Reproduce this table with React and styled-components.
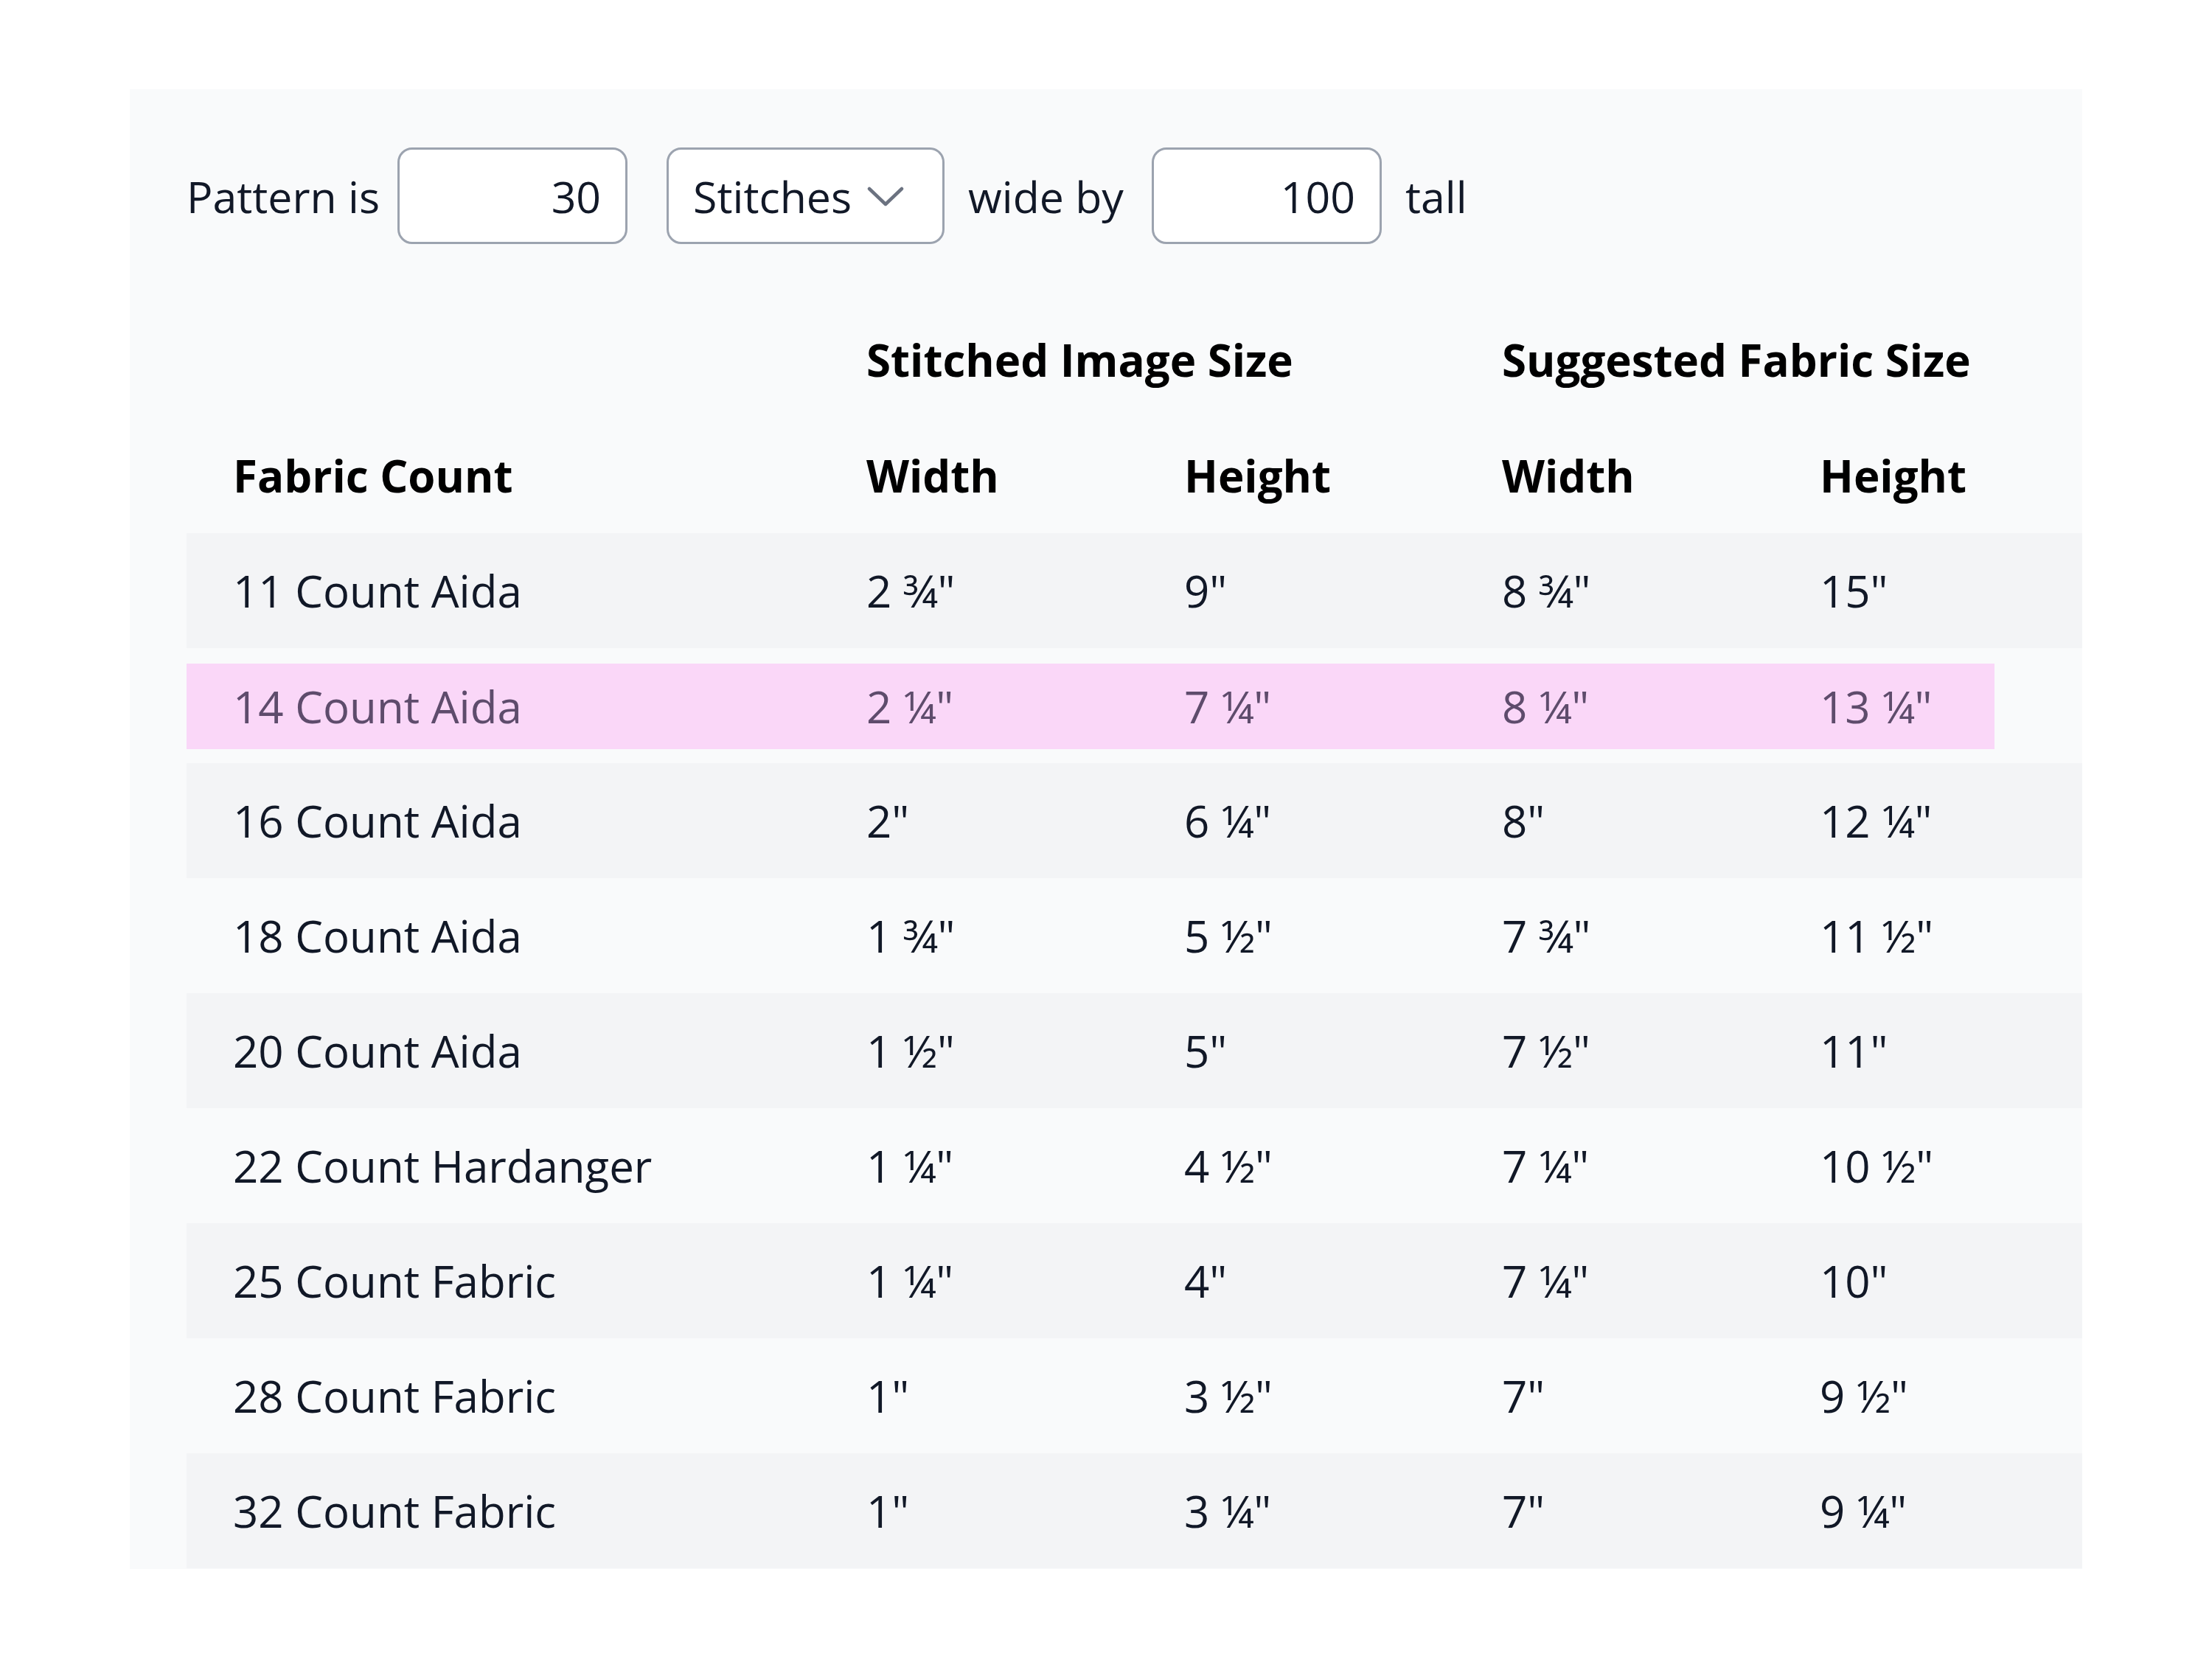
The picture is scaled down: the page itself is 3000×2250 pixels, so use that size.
import React, { useState } from 'react';
import styled, { createGlobalStyle } from 'styled-components';

const GlobalStyle = createGlobalStyle`
  html, body {
    margin: 0;
    padding: 0;
    background: #ffffff;
  }
  body {
    font-family: "Open Sans", "Noto Sans", sans-serif;
    color: #111827;
  }
`;

// rows of the chart: fabric name, stitched w/h, suggested fabric w/h
const rows = [
  ['11 Count Aida', '2 ¾"', '9"', '8 ¾"', '15"'],
  ['14 Count Aida', '2 ¼"', '7 ¼"', '8 ¼"', '13 ¼"'],
  ['16 Count Aida', '2"', '6 ¼"', '8"', '12 ¼"'],
  ['18 Count Aida', '1 ¾"', '5 ½"', '7 ¾"', '11 ½"'],
  ['20 Count Aida', '1 ½"', '5"', '7 ½"', '11"'],
  ['22 Count Hardanger', '1 ¼"', '4 ½"', '7 ¼"', '10 ½"'],
  ['25 Count Fabric', '1 ¼"', '4"', '7 ¼"', '10"'],
  ['28 Count Fabric', '1"', '3 ½"', '7"', '9 ½"'],
  ['32 Count Fabric', '1"', '3 ¼"', '7"', '9 ¼"'],
];

const ChevronIcon = () => (
  <svg width="50" height="30" viewBox="0 0 50 30" fill="none">
    <path d="M3 4 L25 25 L47 4" stroke="#6b7280" strokeWidth="4.5" strokeLinecap="round" strokeLinejoin="round" />
  </svg>
);

const App = () => {
  const [wide, setWide] = useState('30');
  const [tall, setTall] = useState('100');
  const [unit, setUnit] = useState('stitches');

  return (
    <>
      <GlobalStyle />
      <Page>
        <Panel>
          <Controls>
            <Label $gap={24}>Pattern is</Label>
            <NumberInput value={wide} onChange={(e) => setWide(e.target.value)} />
            <SelectWrap>
              <Select value={unit} onChange={(e) => setUnit(e.target.value)}>
                <option value="stitches">Stitches</option>
                <option value="inches">Inches</option>
              </Select>
              <ChevronBox>
                <ChevronIcon />
              </ChevronBox>
            </SelectWrap>
            <Label $gap={38}>wide by</Label>
            <NumberInput value={tall} onChange={(e) => setTall(e.target.value)} />
            <Label>tall</Label>
          </Controls>

          <Chart>
            <HeadRow>
              <HeadCell />
              <HeadCell $span={2}>Stitched Image Size</HeadCell>
              <HeadCell $span={2}>Suggested Fabric Size</HeadCell>
            </HeadRow>
            <HeadRow>
              <HeadCell>Fabric Count</HeadCell>
              <HeadCell>Width</HeadCell>
              <HeadCell>Height</HeadCell>
              <HeadCell>Width</HeadCell>
              <HeadCell>Height</HeadCell>
            </HeadRow>
            {rows.map((row, i) => (
              <BodyRow key={row[0]} $striped={i % 2 === 0} $highlight={i === 1}>
                {row.map((cell, j) => (
                  <Cell key={j} $highlight={i === 1}>{cell}</Cell>
                ))}
              </BodyRow>
            ))}
          </Chart>
        </Panel>
      </Page>
    </>
  );
};

export default App;

const Page = styled.div`
  width: 3000px;
  height: 2250px;
  padding: 121px 176px 0;
  box-sizing: border-box;
`;

const Panel = styled.div`
  background-color: #f9fafb;
  height: 2007px;
  overflow: hidden;
  padding: 79px 0 0 77px;
  box-sizing: border-box;
`;

const Controls = styled.div`
  display: flex;
  align-items: center;
  height: 131px;
  font-size: 59px;
`;

const Label = styled.span`
  margin-right: ${(p) => p.$gap || 32}px;
  white-space: nowrap;
  color: #111827;
`;

const NumberInput = styled.input`
  width: 312px;
  height: 131px;
  box-sizing: border-box;
  border: 3px solid #9ca3af;
  border-radius: 20px;
  background: #ffffff;
  padding: 0 33px;
  text-align: right;
  font: inherit;
  color: #111827;
  margin-right: 32px;
  outline: none;
`;

const SelectWrap = styled.div`
  position: relative;
  width: 377px;
  height: 131px;
  margin-left: 21px;
  margin-right: 32px;
`;

const Select = styled.select`
  appearance: none;
  width: 100%;
  height: 100%;
  box-sizing: border-box;
  border: 3px solid #9ca3af;
  border-radius: 20px;
  background: #ffffff;
  padding: 0 33px;
  font: inherit;
  color: #111827;
  outline: none;
`;

const ChevronBox = styled.div`
  position: absolute;
  left: 272px;
  top: 52px;
  pointer-events: none;
  display: flex;
`;

const Chart = styled.div`
  margin-top: 78px;
  font-size: 60px;
`;

const columns = '859px 431px 431px 431px 1fr';

const HeadRow = styled.div`
  display: grid;
  grid-template-columns: ${columns};
  height: 157px;
  align-items: center;
`;

const HeadCell = styled.div`
  grid-column: span ${(p) => p.$span || 1};
  padding-left: 63px;
  font-weight: 700;
  color: #000000;
  white-space: nowrap;
`;

const BodyRow = styled.div`
  display: grid;
  grid-template-columns: ${columns};
  height: 156px;
  box-sizing: border-box;
  align-items: center;
  background-color: ${(p) => (p.$striped ? '#f3f4f6' : 'transparent')};
  ${(p) =>
    p.$highlight &&
    `
    padding: 21px 119px 19px 0;
    background-color: #fad7f8;
    background-clip: content-box;
  `}
`;

const Cell = styled.div`
  padding-left: 63px;
  white-space: nowrap;
  color: ${(p) => (p.$highlight ? '#5e4c6c' : '#111827')};
`;
